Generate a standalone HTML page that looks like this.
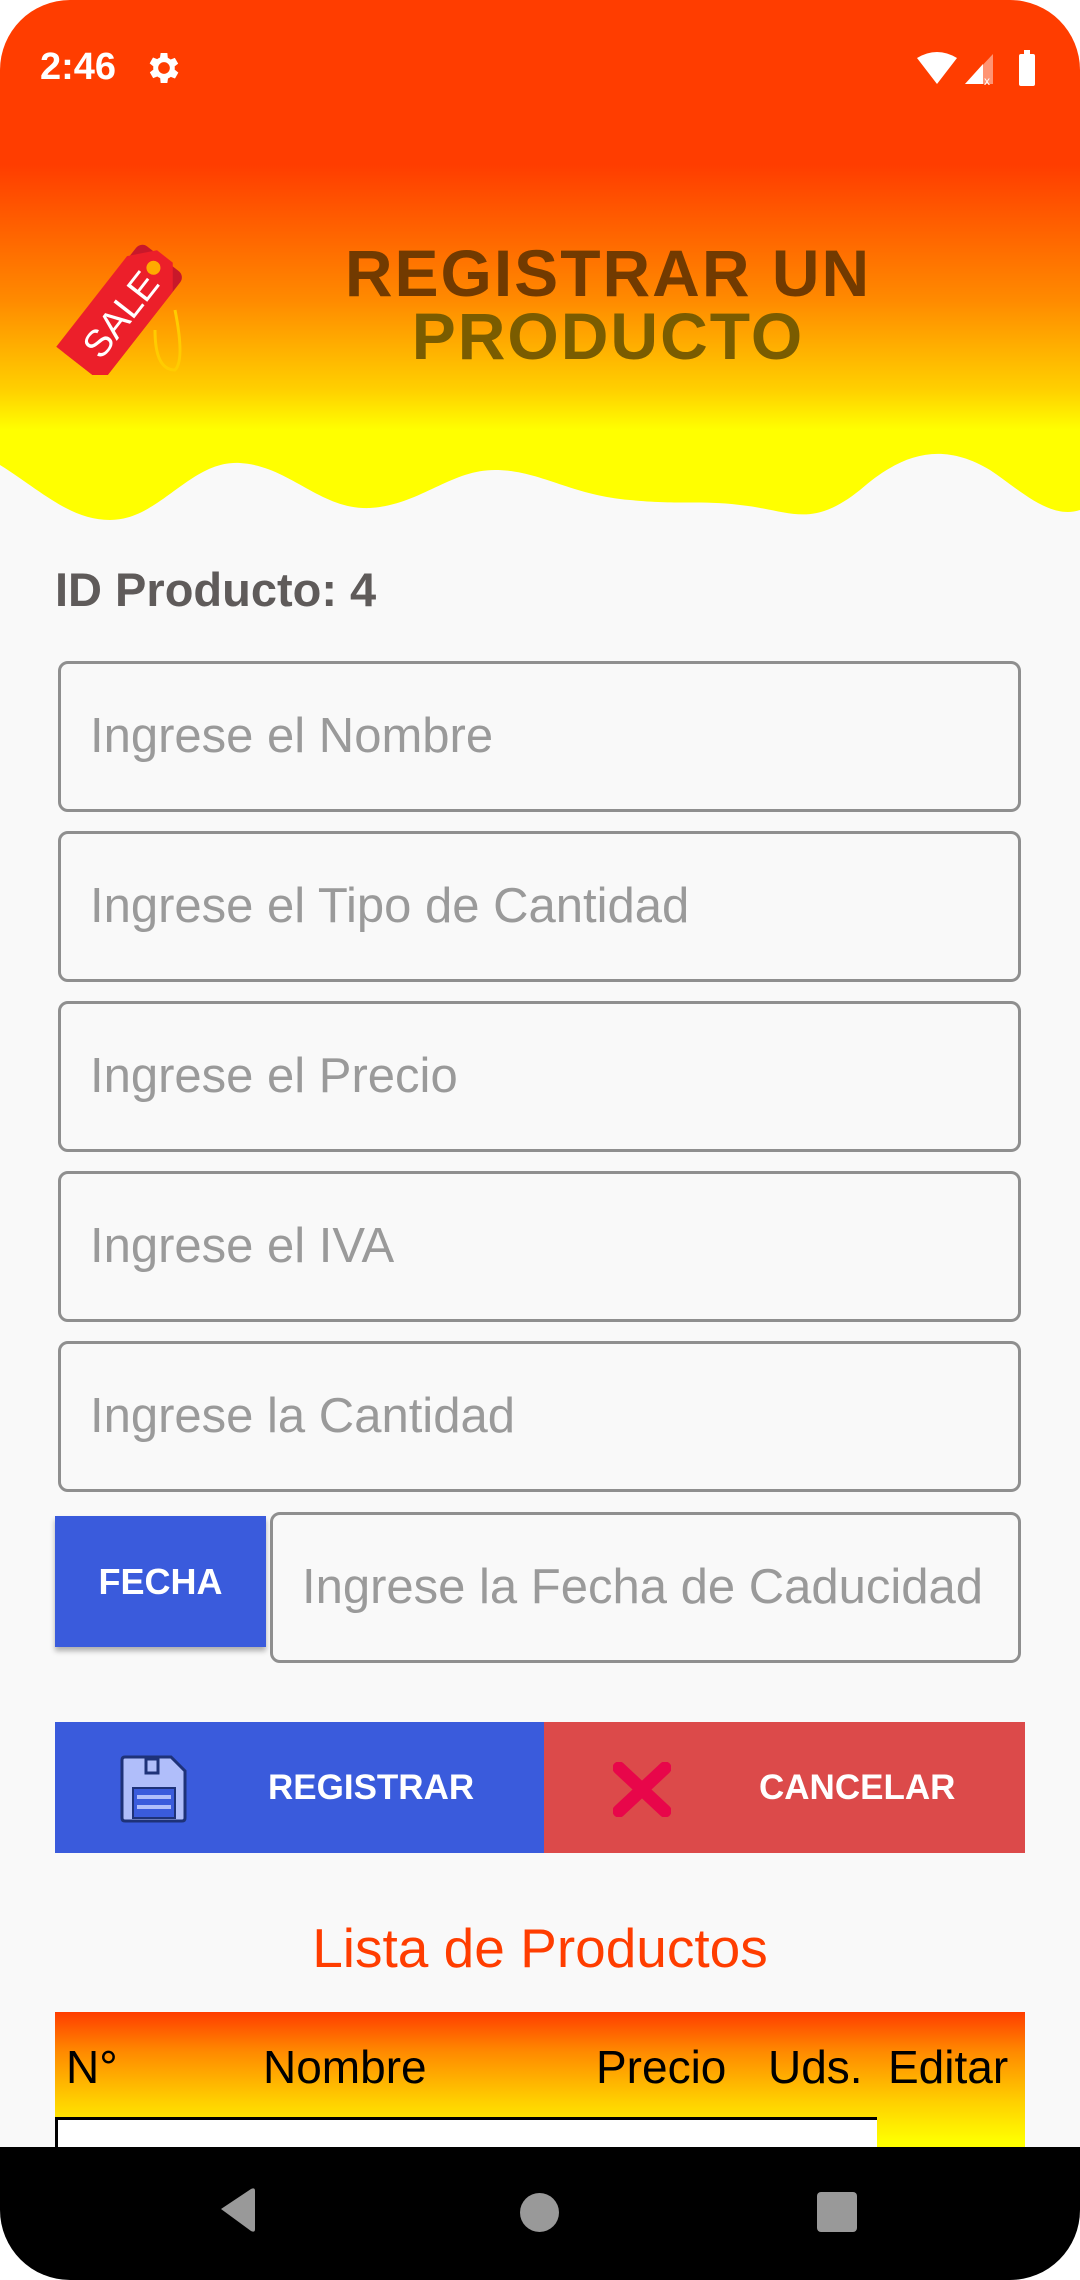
<!DOCTYPE html>
<html><head><meta charset="utf-8"><style>
*{margin:0;padding:0;box-sizing:border-box}
html,body{width:1080px;height:2280px;overflow:hidden;background:#fff}
body{font-family:"Liberation Sans",sans-serif;position:relative}
#screen{position:absolute;left:0;top:0;width:1080px;height:2280px;border-radius:70px;overflow:hidden;background:#f9f9f9}
#hdr{position:absolute;left:0;top:0;width:1080px;height:520px;background:linear-gradient(#ff3d00 0,#ff3d00 165px,#ff8a00 300px,#ffd000 390px,#ffff00 430px,#ffff00 520px)}
.abs{position:absolute}
.inp{position:absolute;left:58px;width:963px;height:151px;border:3px solid #8f8f8f;border-radius:10px;color:#9a9a9a;font-size:49px;line-height:145px;padding-left:29px;white-space:nowrap}
.title{position:absolute;left:108px;width:1000px;text-align:center;font-weight:bold;font-size:66px;line-height:66px;letter-spacing:2px;}
</style></head><body><div id="screen">
<div id="hdr"></div>
<svg class="abs" style="left:0;top:440px" width="1080" height="90" viewBox="0 440 1080 90"><path d="M0 465 C40 490 70 520 110 520 C160 520 190 460 240 463 C290 466 320 510 370 508 C420 505 450 470 495 470 C540 470 570 495 630 500 C680 505 700 500 740 505 C790 510 810 530 860 490 C900 455 940 440 990 470 C1020 490 1050 520 1080 510 L1080 530 L0 530 Z" fill="#f9f9f9"/></svg>
<div class="abs" style="left:40px;top:46px;color:#fff;font-size:38px;font-weight:bold">2:46</div>
<svg class="abs" style="left:144px;top:48px" width="40" height="40" viewBox="0 0 24 24"><path fill="#fff" d="M19.4 13a7.5 7.5 0 0 0 0-2l2.1-1.6-2-3.5-2.5 1a7 7 0 0 0-1.7-1L15 3h-4l-.4 2.7a7 7 0 0 0-1.7 1l-2.5-1-2 3.5L6.6 11a7.5 7.5 0 0 0 0 2l-2.1 1.6 2 3.5 2.5-1a7 7 0 0 0 1.7 1L11 21h4l.4-2.7a7 7 0 0 0 1.7-1l2.5 1 2-3.5zM13 15.5A3.5 3.5 0 1 1 13 8.5a3.5 3.5 0 0 1 0 7z" transform="translate(-1 0)"/></svg>
<svg class="abs" style="left:915px;top:50px" width="130" height="36" viewBox="0 0 130 36"><path d="M2 8 Q22 -4 42 8 L22 34 Z" fill="#fff"/><path d="M50 34 L78 4 L78 34 Z" fill="#fff" opacity=".45"/><path d="M50 34 L68 14 L68 34 Z" fill="#fff"/><text x="69" y="35" fill="#fff" font-size="12" font-family="Liberation Sans">x</text><rect x="104" y="4" width="16" height="32" rx="2" fill="#fff"/><rect x="109" y="0" width="6" height="5" fill="#fff"/></svg>
<svg class="abs" style="left:55px;top:240px" width="140" height="135" viewBox="0 0 140 135"><path d="M120 70 Q130 120 120 130 Q100 130 100 90" fill="none" stroke="#ffcc00" stroke-width="3"/><g transform="translate(68 70) rotate(-52)"><rect x="-70" y="-28" width="135" height="56" rx="8" fill="#c8182a"/><path d="M-70 -30 H45 L68 -10 V10 L45 28 H-70 Z" fill="#ec1f2a"/><circle cx="52" cy="-2" r="7" fill="#ffaa00"/><text x="-5" y="14" text-anchor="middle" fill="#fff" font-size="38" font-family="Liberation Sans">SALE</text></g></svg>
<div class="title" style="top:240px;color:#723a00">REGISTRAR UN</div>
<div class="title" style="top:303px;color:#7a5c00">PRODUCTO</div>
<div class="abs" style="left:55px;top:562px;font-size:47px;font-weight:bold;color:#5f5b5a">ID Producto: 4</div>
<div class="inp" style="top:661px">Ingrese el Nombre</div>
<div class="inp" style="top:831px">Ingrese el Tipo de Cantidad</div>
<div class="inp" style="top:1001px">Ingrese el Precio</div>
<div class="inp" style="top:1171px">Ingrese el IVA</div>
<div class="inp" style="top:1341px">Ingrese la Cantidad</div>
<div class="abs" style="left:55px;top:1516px;width:211px;height:131px;background:#3a5bdc;box-shadow:0 4px 5px rgba(0,0,0,.3);color:#fff;font-size:36px;font-weight:bold;text-align:center;line-height:131px">FECHA</div>
<div class="inp" style="left:270px;top:1512px;width:751px;height:151px;padding-left:29px">Ingrese la Fecha de Caducidad</div>
<div class="abs" style="left:55px;top:1722px;width:489px;height:131px;background:#3a5bdc"></div>
<div class="abs" style="left:544px;top:1722px;width:481px;height:131px;background:#dc4a4a"></div>
<svg class="abs" style="left:119px;top:1754px" width="70" height="70" viewBox="0 0 70 70"><path d="M3 6 Q3 3 6 3 H52 L66 17 V64 Q66 67 63 67 H6 Q3 67 3 64 Z" fill="#b0befa" stroke="#1e3278" stroke-width="3"/><rect x="27" y="5" width="12" height="14" fill="#b0befa" stroke="#1e3278" stroke-width="3"/><rect x="14" y="34" width="42" height="30" fill="#3a5bdc" stroke="#1e3278" stroke-width="2"/><rect x="18" y="41" width="34" height="4" fill="#b0befa"/><rect x="18" y="51" width="34" height="4" fill="#b0befa"/></svg>
<div class="abs" style="left:268px;top:1768px;color:#fff;font-size:35px;font-weight:bold">REGISTRAR</div>
<svg class="abs" style="left:613px;top:1762px" width="58" height="55" viewBox="0 0 58 55"><path d="M6 6 L52 49 M52 6 L6 49" stroke="#e8064a" stroke-width="13" stroke-linecap="round"/></svg>
<div class="abs" style="left:759px;top:1768px;color:#fff;font-size:35px;font-weight:bold">CANCELAR</div>
<div class="abs" style="left:0;width:1080px;top:1916px;text-align:center;color:#ff3d00;font-size:55px">Lista de Productos</div>
<div class="abs" style="left:55px;top:2012px;width:970px;height:140px;background:linear-gradient(#ff3d00 0,#ff8a00 40px,#ffd000 90px,#ffff00 130px)"></div>
<div class="abs" style="top:2040px;left:66px;font-size:46px;color:#000">N°</div>
<div class="abs" style="top:2040px;left:263px;font-size:46px;color:#000">Nombre</div>
<div class="abs" style="top:2040px;left:596px;font-size:46px;color:#000">Precio</div>
<div class="abs" style="top:2040px;left:768px;font-size:46px;color:#000">Uds.</div>
<div class="abs" style="top:2040px;left:888px;font-size:46px;color:#000">Editar</div>
<div class="abs" style="left:55px;top:2117px;width:822px;height:40px;background:#fff;border-top:3px solid #000;border-left:3px solid #000"></div>
<div class="abs" style="left:0;top:2147px;width:1080px;height:133px;background:#000"></div>
<svg class="abs" style="left:215px;top:2185px" width="50" height="50" viewBox="0 0 50 50"><path d="M6 24 L36 4 Q40 2 40 6 V44 Q40 48 36 46 Z" fill="#999"/></svg>
<div class="abs" style="left:520px;top:2193px;width:39px;height:39px;border-radius:50%;background:#999"></div>
<div class="abs" style="left:817px;top:2192px;width:40px;height:40px;border-radius:4px;background:#999"></div>
</div></body></html>
